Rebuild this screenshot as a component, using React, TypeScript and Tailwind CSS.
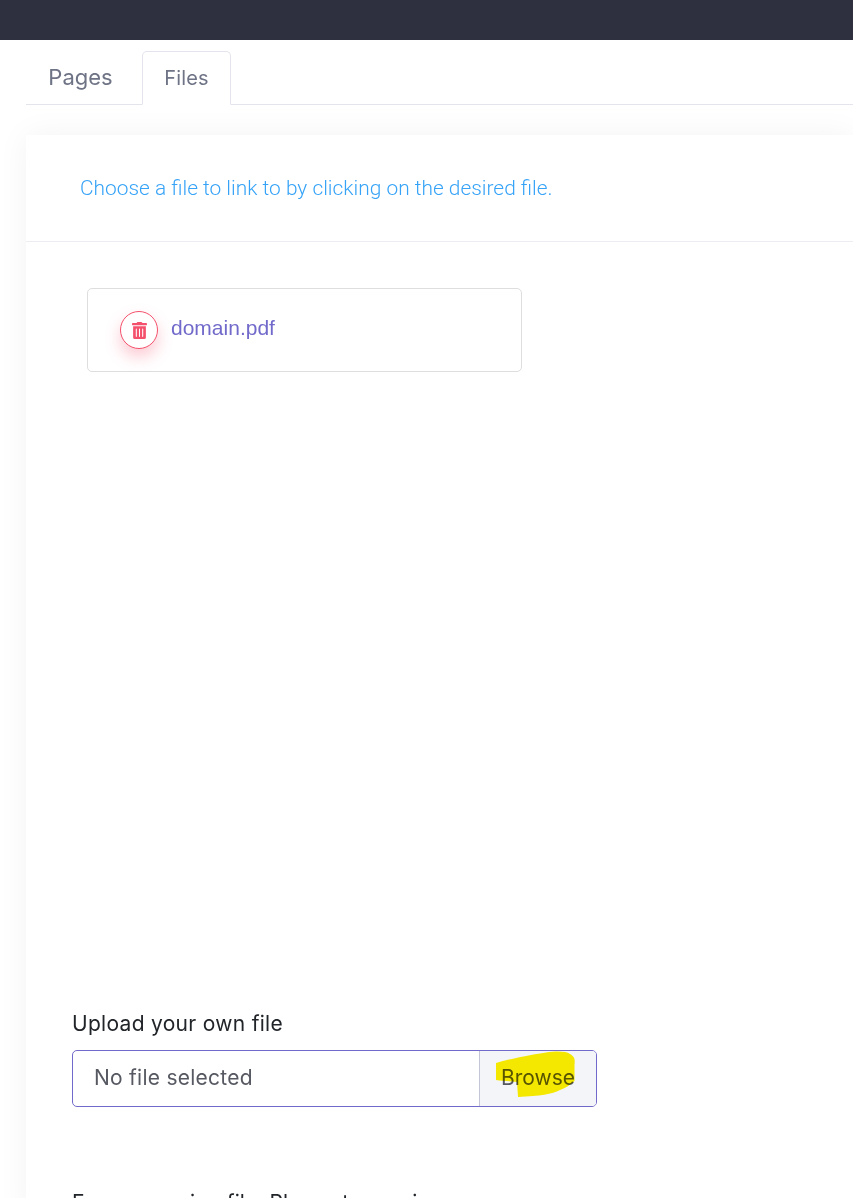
import { FaTrashAlt } from "react-icons/fa";

const poppins = "font-['Inter','Liberation_Sans',sans-serif]";

export default function App() {
  return (
    <div className={`h-[1198px] w-full overflow-hidden bg-white ${poppins}`}>
      <div className="h-10 bg-[#2e3040]" />

      <div className="ml-[26px] mt-[11px] flex h-[54px] border-b border-[#e4e5ec]">
        <div className="flex h-[54px] w-[116px] items-center justify-center pb-[2px] pr-[7px] text-[22px] text-[#6e7385]">
          Pages
        </div>
        <div className="flex h-[54px] w-[89px] items-center justify-center rounded-t-[5px] border border-b-white border-[#e4e5ec] bg-white text-[20px] tracking-[0.2px] text-[#6e7385]">
          Files
        </div>
      </div>

      <div className="ml-[26px] mt-[30px] bg-white shadow-[0_0_30px_rgba(0,0,0,0.05)]">
        <div className="flex h-[107px] items-center border-b border-[#ebedf2] pl-[54px] pt-[2px] font-['Roboto',sans-serif] text-[20.9px] font-light text-[#36a3f7]">
          Choose a file to link to by clicking on the desired file.
        </div>

        <div className="h-[767px] pl-[61px] pt-[46px]">
          <div className="flex h-[84px] w-[435px] items-center rounded-[5px] border border-[#dedede] pl-[32px]">
            <button className="flex h-[38px] w-[38px] items-center justify-center rounded-full border border-[#f4516c] bg-white shadow-[0_8px_16px_rgba(244,81,108,0.3)]">
              <FaTrashAlt size={17} className="text-[#f4516c]" />
            </button>
            <span className="mb-[4px] ml-[13px] font-['Liberation_Sans',sans-serif] text-[21px] text-[#716aca]">
              domain.pdf
            </span>
          </div>
        </div>

        <div className="pl-[46px]">
          <div className="text-[21px] leading-[30px] tracking-[0.3px] text-[#212529]">Upload your own file</div>
          <div className="mt-[11px] flex h-[57px] w-[525px] overflow-hidden rounded-[5px] border border-[#716aca]">
            <div className="flex flex-1 items-center pb-[2px] pl-[21px] text-[21px] tracking-[0.25px] text-[#575962]">
              No file selected
            </div>
            <div className="relative flex w-[117px] items-center justify-center border-l border-[#c4c5d6] bg-[#f4f5f8] pb-[2px] text-[21px] text-[#575962]">
              Browse
              <svg
                className="absolute left-0 top-0 mix-blend-multiply"
                width="117"
                height="55"
                viewBox="0 0 117 55"
              >
                <path
                  d="M16 12 C30 8 44 5 66 1.5 C76 0 86 0 90 3 C95 6 95 8 94.5 14 L94.5 30 C90 34 86 37 80 39 C72 43 60 45 38 46 L37 31 C30 30 22 30 16 29 Z"
                  fill="#fff100"
                />
              </svg>
            </div>
          </div>
          <div className="mt-[81px] text-[21px] leading-[30px] tracking-[0.1px] text-[#212529]">
            Error removing file. Please try again.
          </div>
        </div>
      </div>
    </div>
  );
}
